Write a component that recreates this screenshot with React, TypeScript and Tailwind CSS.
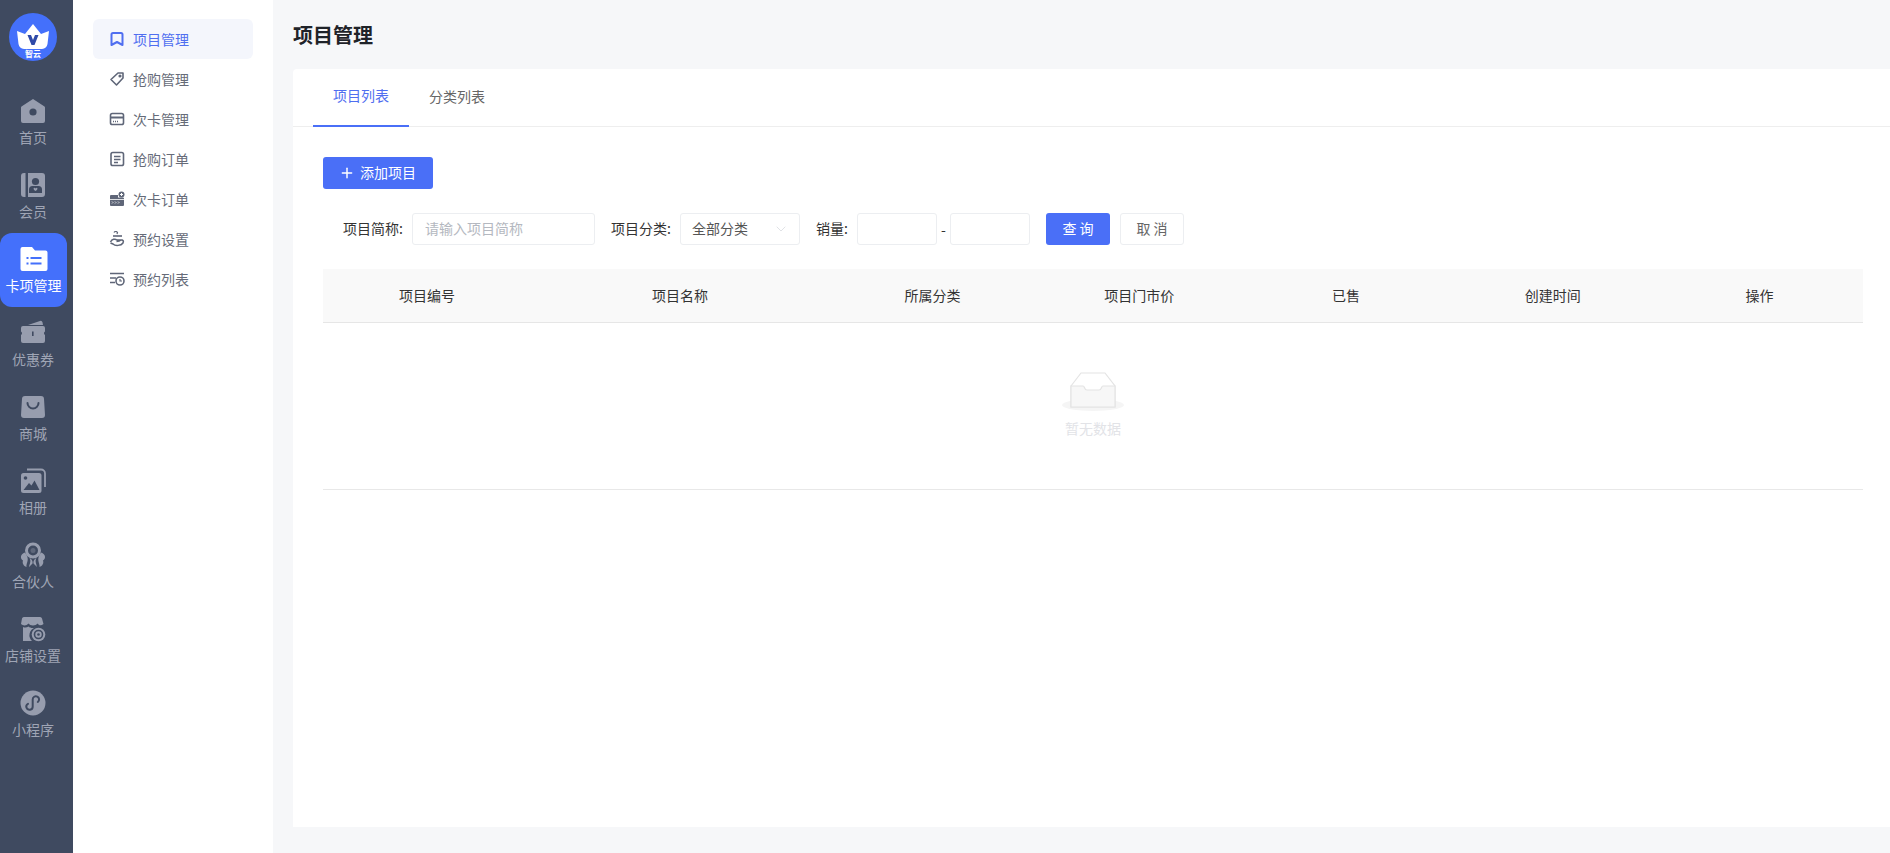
import { ReactNode } from 'react';
import { Plus, ChevronDown } from 'lucide-react';

const DARK = '#3f4a60';
const FILL = '#979dae';

function Ico({ children }: { children: ReactNode }) {
    return (
        <svg width="26" height="26" viewBox="0 0 26 26" fill={FILL}>
            {children}
        </svg>
    );
}

const mainMenu: { label: string; active?: boolean; icon: ReactNode }[] = [
    {
        label: '首页',
        icon: (
            <Ico>
                <path d="M13 1 L24.5 8.5 a1.5 1.5 0 0 1 .5 1.2 V23 a2 2 0 0 1-2 2 H3 a2 2 0 0 1-2-2 V9.7 a1.5 1.5 0 0 1 .5-1.2 Z" />
                <circle cx="13" cy="14" r="3.6" fill={DARK} />
            </Ico>
        ),
    },
    {
        label: '会员',
        icon: (
            <Ico>
                <path d="M4 1 H5.5 V25 H4 a3 3 0 0 1-3-3 V4 a3 3 0 0 1 3-3 Z" />
                <path d="M8 1 H22 a3 3 0 0 1 3 3 V22 a3 3 0 0 1-3 3 H8 Z" />
                <circle cx="15.5" cy="9.5" r="3.6" fill={DARK} />
                <path d="M9 21 V17.5 a3.5 3.5 0 0 1 3.5-3.5 H18.5 a3.5 3.5 0 0 1 3.5 3.5 V21 Z" fill={DARK} />
                <path d="M13.5 16.5 a1.2 1.2 0 0 1 2 0 a1.2 1.2 0 0 1 2 0 c0 1.2-1 1.8-2 2.6 c-1-.8-2-1.4-2-2.6 Z" fill={FILL} />
            </Ico>
        ),
    },
    {
        label: '卡项管理',
        active: true,
        icon: (
            <svg width="28" height="26" viewBox="0 0 28 26" fill="#ffffff">
                <path d="M2.5 1 H12 L15 4.5 H25.5 a2 2 0 0 1 2 2 V23 a2 2 0 0 1-2 2 H2.5 a2 2 0 0 1-2-2 V3 a2 2 0 0 1 2-2 Z" />
                <rect x="6.5" y="11" width="2" height="2" fill="#4470fb" />
                <rect x="10.5" y="11" width="11" height="2" fill="#4470fb" />
                <rect x="6.5" y="16.5" width="2" height="2" fill="#4470fb" />
                <rect x="10.5" y="16.5" width="11" height="2" fill="#4470fb" />
            </svg>
        ),
    },
    {
        label: '优惠券',
        icon: (
            <Ico>
                <path d="M8 5 L20 1 a2 2 0 0 1 2.5 1.5 L23 5 Z" />
                <path d="M3 6 H23 a2 2 0 0 1 2 2 V11.5 a2 2 0 0 0 0 3.5 V21 a2 2 0 0 1-2 2 H3 a2 2 0 0 1-2-2 V15 a2 2 0 0 0 0-3.5 V8 a2 2 0 0 1 2-2 Z" />
                <rect x="12" y="11.5" width="1.6" height="4.5" fill={DARK} />
            </Ico>
        ),
    },
    {
        label: '商城',
        icon: (
            <Ico>
                <path d="M5 2 H21 a3 3 0 0 1 3 3 L25 21 a3 3 0 0 1-3 3 H4 a3 3 0 0 1-3-3 L2 5 a3 3 0 0 1 3-3 Z" />
                <path d="M7.5 9 a5.5 5.5 0 0 0 11 0" fill="none" stroke={DARK} strokeWidth="2" strokeLinecap="round" />
            </Ico>
        ),
    },
    {
        label: '相册',
        icon: (
            <Ico>
                <path d="M7 1.5 H21 a4 4 0 0 1 4 4 V19" fill="none" stroke={FILL} strokeWidth="1.8" />
                <rect x="1" y="5" width="20.5" height="20" rx="2.5" />
                <circle cx="5.5" cy="10" r="1.8" fill={DARK} />
                <path d="M3.5 22 L9 15 L11.5 17.5 L14.5 12.5 L19.5 22 Z" fill={DARK} />
            </Ico>
        ),
    },
    {
        label: '合伙人',
        icon: (
            <Ico>
                <circle cx="13" cy="8.5" r="6.5" fill="none" stroke={FILL} strokeWidth="3" />
                <circle cx="13" cy="8.5" r="2.5" fill={FILL} opacity="0.35" />
                <path d="M5 10.5 C0 12 0 17 3 18.5 C2 21 3.500 24 6.500 25 C6 22 8.500 19 7.500 15.500 C7 13.500 6 12 5 10.500 Z" />
                <path d="M21 10.5 C26 12 26 17 23 18.5 C24 21 22.500 24 19.500 25 C20 22 17.500 19 18.500 15.500 C19 13.500 20 12 21 10.500 Z" />
                <path d="M9.500 16 C11.500 19 9.500 22 9 25 L12.500 21.500 C13 19.500 12 17 9.500 16 Z" />
                <path d="M16.500 16 C14.500 19 16.500 22 17 25 L13.500 21.500 C13 19.500 14 17 16.500 16 Z" />
            </Ico>
        ),
    },
    {
        label: '店铺设置',
        icon: (
            <Ico>
                <path d="M4 1 H20 a2 2 0 0 1 2 1.5 L23.5 8 C21 10 19 9.5 17.5 7.5 C16 10 10 10 8.5 7.5 C6.500 10 3 10 1 8 L2 2.5 A2 2 0 0 1 4 1 Z" />
                <path d="M3 11 C5 12 7 11.5 8.5 10.5 C10 12 13 12.5 15 11.5 A8 8 0 0 0 12 25 H3 Z" />
                <circle cx="18.5" cy="18.5" r="6.8" />
                <circle cx="18.5" cy="18.5" r="4" fill="none" stroke={DARK} strokeWidth="1.6" />
                <circle cx="18.5" cy="18.5" r="1.3" fill={DARK} />
            </Ico>
        ),
    },
    {
        label: '小程序',
        icon: (
            <Ico>
                <circle cx="13" cy="13" r="12.5" />
                <path d="M8 13.8 A3.2 3.2 0 1 0 12.7 16.5 V9.5 A3.200 3.200 0 1 1 17.800 12" fill="none" stroke={DARK} strokeWidth="2" strokeLinecap="round" />
            </Ico>
        ),
    },
];

const subIconProps = { width: 16, height: 16, viewBox: '0 0 16 16', fill: 'none', stroke: 'currentColor', strokeWidth: 1.6 };

const subMenu: { label: string; active?: boolean; icon: ReactNode }[] = [
    {
        label: '项目管理',
        active: true,
        icon: (
            <svg {...subIconProps}>
                <path d="M2.500 3.500 a1.500 1.500 0 0 1 1.500-1.500 H12 a1.500 1.500 0 0 1 1.500 1.500 V14 L8 11 L2.500 14 Z" strokeWidth="2" strokeLinejoin="round" />
            </svg>
        ),
    },
    {
        label: '抢购管理',
        icon: (
            <svg {...subIconProps}>
                <path d="M9 2 H14 V7 L7.5 14 L2 8.5 Z" strokeLinejoin="round" />
                <circle cx="11" cy="5" r="0.8" fill="currentColor" />
            </svg>
        ),
    },
    {
        label: '次卡管理',
        icon: (
            <svg {...subIconProps}>
                <rect x="1.5" y="2.5" width="13" height="11" rx="1.8" />
                <path d="M1.5 6.500 H14.500" strokeWidth="2" />
                <path d="M4 10.500 H9" strokeDasharray="1 1" />
            </svg>
        ),
    },
    {
        label: '抢购订单',
        icon: (
            <svg {...subIconProps}>
                <rect x="2" y="1.5" width="12.5" height="13" rx="1.8" />
                <path d="M5 5.500 H11.500 M5 8.500 H11.500 M5 11.500 H9" />
            </svg>
        ),
    },
    {
        label: '次卡订单',
        icon: (
            <svg {...subIconProps} stroke="none" fill="currentColor">
                <path d="M2 4 H9 V6.5 H14 a1 1 0 0 1 1 1 V14 a1 1 0 0 1-1 1 H2 a1 1 0 0 1-1-1 V5 a1 1 0 0 1 1-1 Z" />
                <circle cx="12.5" cy="3.5" r="3" />
                <path d="M11 3.500 H14 M12.500 2 V5" stroke="#ffffff" strokeWidth="1" />
                <path d="M1 8.500 H15" stroke="#ffffff" strokeWidth="0.8" />
                <path d="M3 10.500 L4 11.500 L3 12.500 M6 10.500 L7 11.500 L6 12.500 M9 10.500 L10 11.500 L9 12.500" stroke="#ffffff" strokeWidth="0.8" fill="none" />
            </svg>
        ),
    },
    {
        label: '预约设置',
        icon: (
            <svg {...subIconProps}>
                <path d="M5 1.500 a2 2 0 0 1 3.500 0 L8 3" strokeWidth="1.200" />
                <path d="M4 5 H13" />
                <path d="M1.500 11 C3 8 6 7.500 8 9 H12 C10.500 10.500 9 10.500 7.500 10.500 M12.500 9 C14 9 15 10 14 12 C12 15 6 15 4 13 L1.500 12" strokeWidth="1.500" />
            </svg>
        ),
    },
    {
        label: '预约列表',
        icon: (
            <svg {...subIconProps}>
                <path d="M1 2.500 H15 M1 7 H7 M1 11.500 H6" />
                <circle cx="11" cy="10" r="4" />
                <path d="M11 8 V10 H13" strokeWidth="1.200" />
            </svg>
        ),
    },
];

const columns = ['项目编号', '项目名称', '所属分类', '项目门市价', '已售', '创建时间', '操作'];

const inputClass = 'h-8 rounded-[3px] border border-[#eceef1] bg-white px-3 pb-[2px] text-sm text-[#333] outline-none placeholder:text-[#b4b8c0]';

export default function App() {
    return (
        <div className="flex h-[853px] w-full overflow-hidden bg-[#f6f7f9] font-['Noto_Sans_CJK_SC','Liberation_Sans',sans-serif] text-sm text-[#333]">
            {/* main nav */}
            <aside className="w-[73px] shrink-0 bg-[#3f4a60]">
                <div className="flex h-[85px] items-start pl-[9px] pt-[13px]">
                    <svg width="48" height="48" viewBox="0 0 48 48">
                        <circle cx="24" cy="24" r="24" fill="#4470fb" />
                        <path d="M8 18 L16 21 L24 11 L32 21 L40 18 L38.500 31 C38 34 36 35.500 33 36 H15 C12 35.500 10 34 9.500 31 Z" fill="#ffffff" />
                        <path d="M18.500 22 H22 L24 27 L26 22 H29.500 L25.500 32 H22.500 Z" fill="#2f4aa8" />
                        <text x="24" y="44" textAnchor="middle" fontSize="8" fontWeight="700" fill="#ffffff">智云</text>
                    </svg>
                </div>
                <nav>
                    {mainMenu.map((item) => (
                        <div
                            key={item.label}
                            className={
                                item.active
                                    ? 'flex h-[74px] w-[67px] flex-col items-center gap-[3px] rounded-xl bg-[#4470fb] pt-[13px] text-white'
                                    : 'flex h-[74px] w-[66px] flex-col items-center gap-[3px] pt-[13px] text-[#9fa5b5]'
                            }
                        >
                            {item.icon}
                            <span className="whitespace-nowrap text-sm leading-5">{item.label}</span>
                        </div>
                    ))}
                </nav>
            </aside>

            {/* sub nav */}
            <aside className="w-[200px] shrink-0 bg-white pl-5 pr-5 pt-[19px]">
                {subMenu.map((item) => (
                    <div
                        key={item.label}
                        className={
                            item.active
                                ? 'flex h-10 items-center gap-2 rounded-md bg-[#f4f6fc] pl-4 text-[#4f6ef0]'
                                : 'flex h-10 items-center gap-2 pl-4 text-[#666b78]'
                        }
                    >
                        <span className={item.active ? 'text-[#4f6ef0]' : 'text-[#5f6678]'}>{item.icon}</span>
                        <span>{item.label}</span>
                    </div>
                ))}
            </aside>

            {/* content */}
            <main className="flex min-w-0 flex-1 flex-col pb-[26px] pl-5">
                <h1 className="flex h-[69px] shrink-0 items-center text-xl font-bold text-[#1f2329]">项目管理</h1>
                <section className="flex-1 rounded-tl-sm bg-white">
                    <div className="flex h-[58px] border-b border-[#eeeeee] pl-5">
                        <div className="-mb-px flex w-24 items-center justify-center border-b-2 border-[#4a6ff7] pb-1 text-[#4f6ef0]">项目列表</div>
                        <div className="flex w-24 items-center justify-center pb-[3px] text-[#666666]">分类列表</div>
                    </div>
                    <div className="pl-[30px] pr-[27px] pt-[30px]">
                        <button className="flex h-8 w-[110px] items-center rounded-[3px] bg-[#4a6ff7] pb-[2px] pl-4 text-white">
                            <Plus size={16} strokeWidth={2.2} className="mt-[2px]" />
                            <span className="ml-[5px]">添加项目</span>
                        </button>

                        <div className="mt-6 flex h-8 items-center pl-5">
                            <label className="w-[69px] whitespace-nowrap pb-[2px]">项目简称:</label>
                            <input className={inputClass + ' w-[183px]'} placeholder="请输入项目简称" />
                            <label className="ml-4 w-[69px] whitespace-nowrap pb-[2px]">项目分类:</label>
                            <div className="flex h-8 w-[120px] items-center justify-between rounded-[3px] border border-[#eceef1] pl-[11px] pr-[10px] text-[#555]">
                                <span className="pb-[2px]">全部分类</span>
                                <ChevronDown size={16} strokeWidth={1} className="text-[#d0d3d9]" />
                            </div>
                            <label className="ml-4 w-[41px] whitespace-nowrap pb-[2px]">销量:</label>
                            <input className={inputClass + ' w-20'} />
                            <span className="w-[13px] text-center">-</span>
                            <input className={inputClass + ' w-20'} />
                            <button className="ml-4 h-8 w-16 rounded-[3px] bg-[#4a6ff7] pb-[2px] text-white">查 询</button>
                            <button className="ml-[10px] h-8 w-16 rounded-[3px] border border-[#eceef1] bg-white pb-[2px] text-[#666]">取 消</button>
                        </div>

                        <div className="mt-6 grid h-[54px] grid-cols-[208px_298px_repeat(5,1fr)] items-center border-b border-[#e6e6e6] bg-[#f9f9f9] pb-[2px] text-center">
                            {columns.map((c) => (
                                <div key={c}>{c}</div>
                            ))}
                        </div>
                        <div className="flex h-[167px] flex-col items-center border-b border-[#e8e8e8] pt-[48px]">
                            <svg width="64" height="42" viewBox="0 0 64 42" fill="none">
                                <ellipse cx="32" cy="34" rx="31" ry="6" fill="#f5f5f5" />
                                <path d="M10 15 L20 2 H44 L54 15 V36 H10 Z" fill="#ffffff" stroke="#e4e4e4" strokeWidth="1.2" />
                                <path d="M10 15 H22 C24 15 23 19 26 19 H38 C41 19 40 15 42 15 H54 V36 H10 Z" fill="#f7f7f7" stroke="#e4e4e4" strokeWidth="1.2" />
                            </svg>
                            <span className="mt-[5px] text-[#e2e3e7]">暂无数据</span>
                        </div>
                    </div>
                </section>
            </main>
        </div>
    );
}
